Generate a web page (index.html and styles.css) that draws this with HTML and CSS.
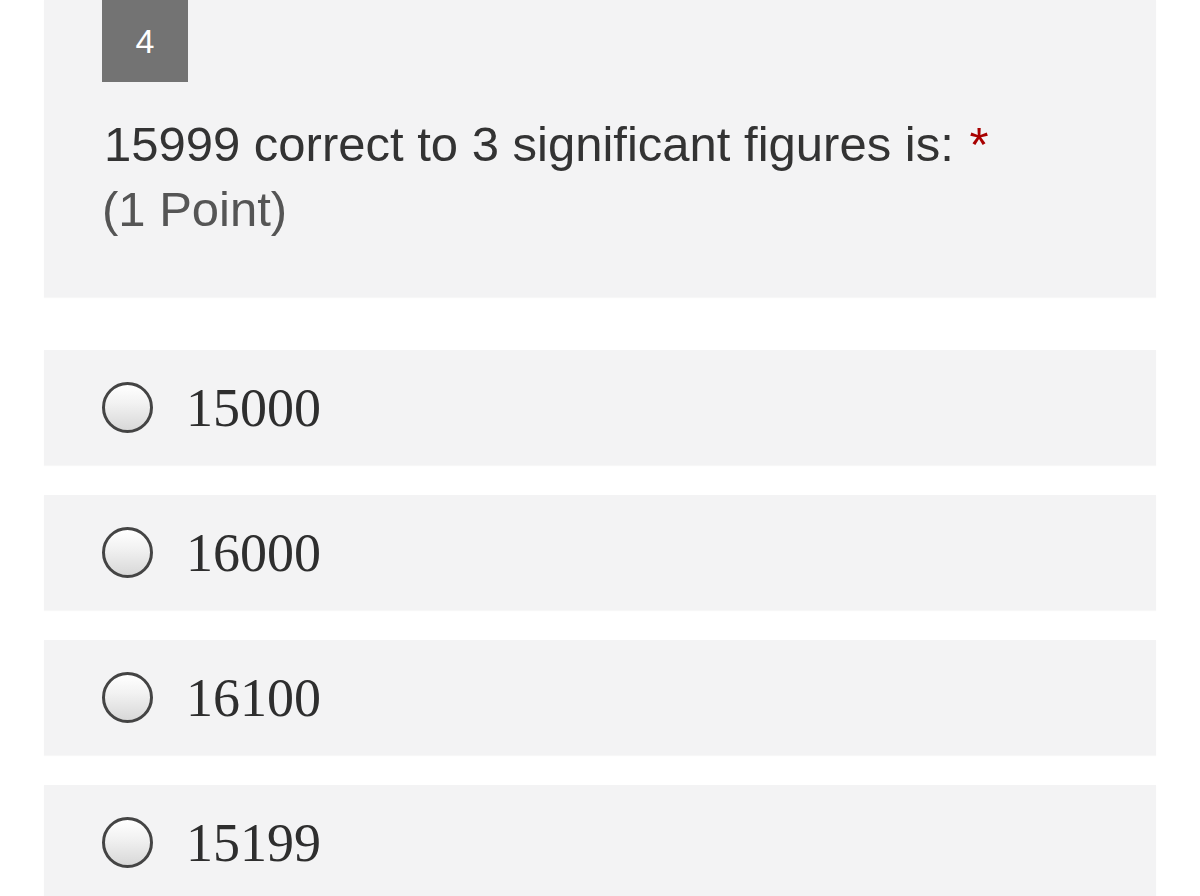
FILE: index.html
```html
<!DOCTYPE html>
<html>
<head>
<meta charset="utf-8">
<link rel="stylesheet" href="styles.css">
</head>
<body>
<div class="page">
  <section class="question">
    <div class="badge">4</div>
    <div class="qtext">
      <div class="title">15999 correct to 3 significant figures is: <span class="req">*</span></div>
      <div class="points">(1 Point)</div>
    </div>
  </section>
  <div class="options">
    <label class="option"><span class="radio"></span><span class="val">15000</span></label>
    <label class="option"><span class="radio"></span><span class="val">16000</span></label>
    <label class="option"><span class="radio"></span><span class="val">16100</span></label>
    <label class="option"><span class="radio"></span><span class="val">15199</span></label>
  </div>
</div>
</body>
</html>
```
FILE: styles.css
```css
html, body {
  margin: 0;
  padding: 0;
  background: #ffffff;
}
body {
  font-family: "Liberation Sans", Arial, sans-serif;
  overflow: hidden;
}
.page {
  padding: 0 44px;
}
.question {
  background: #f3f3f4;
  height: 297px;
  box-sizing: border-box;
  padding: 0 0 0 58px;
  box-shadow: 0 1px 1px rgba(0,0,0,0.03);
}
.badge {
  width: 86px;
  height: 82px;
  background: #737373;
  color: #ffffff;
  font-size: 34px;
  display: flex;
  align-items: center;
  justify-content: center;
}
.qtext {
  margin-top: 30px;
  font-size: 49px;
  line-height: 65px;
  color: #333333;
}
.title {
  margin-left: 2px;
}
.req {
  color: #a80000;
  margin-left: 2px;
}
.points {
  color: #555555;
}
.options {
  margin-top: 53px;
  display: flex;
  flex-direction: column;
  gap: 30px;
}
.option {
  background: #f3f3f4;
  height: 115px;
  display: flex;
  align-items: center;
  padding-left: 58px;
  box-shadow: 0 1px 1px rgba(0,0,0,0.03);
}
.radio {
  width: 45px;
  height: 45px;
  border: 3px solid #444444;
  border-radius: 50%;
  background: linear-gradient(#ffffff 0%, #f2f2f2 40%, #d8d8d8 100%);
  flex: none;
}
.val {
  font-family: "Liberation Serif", "Times New Roman", serif;
  font-size: 54px;
  color: #2e2e2e;
  margin-left: 33px;
  line-height: 1;
}
```
